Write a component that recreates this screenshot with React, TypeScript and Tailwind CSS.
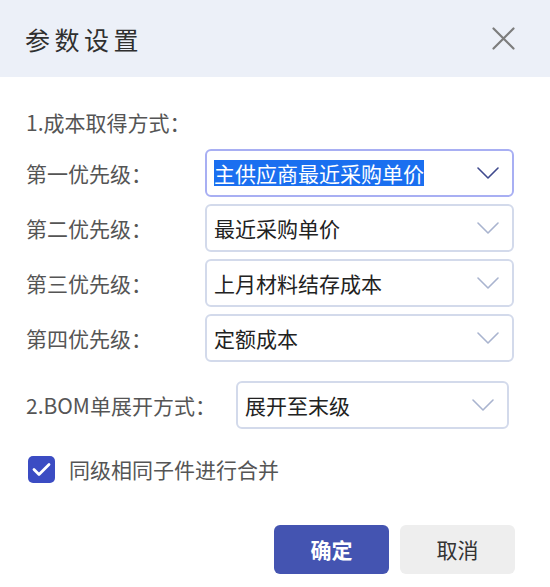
import React from "react";

const Chevron = ({ color }: { color: string }) => (
  <svg width="22" height="12" viewBox="0 0 22 12" fill="none">
    <path d="M1 1 L11 11 L21 1" stroke={color} strokeWidth="1.6" strokeLinecap="round" strokeLinejoin="round" />
  </svg>
);

const Select = ({
  value,
  focused,
  width,
}: {
  value: string;
  focused?: boolean;
  width: string;
}) => (
  <div
    className={
      "h-[48px] rounded-[6px] border-2 flex items-center justify-between pl-[7px] pr-[13px] " +
      width +
      (focused ? " border-[#a8aff3]" : " border-[#d3daeb]")
    }
  >
    {focused ? (
      <span className="bg-[#1a6ff0] text-white text-[21px] leading-[26px] px-0">{value}</span>
    ) : (
      <span className="text-[#222222] text-[21px] leading-[26px]">{value}</span>
    )}
    <Chevron color={focused ? "#3f4a8e" : "#a9b4cf"} />
  </div>
);

const Row = ({ label, value, focused }: { label: string; value: string; focused?: boolean }) => (
  <div className="flex items-center">
    <div className="w-[179px] text-[21px] text-[#555555] leading-[30px]">{label}</div>
    <Select value={value} focused={focused} width="w-[309px]" />
  </div>
);

export default function App() {
  return (
    <div
      className="w-[550px] h-[587px] bg-white overflow-hidden"
      style={{ fontFamily: '"Noto Sans CJK SC", "Noto Sans", sans-serif' }}
    >
      <div className="h-[77px] bg-[#ecf0f8] flex items-center justify-between pl-[25px] pr-[35px]">
        <div className="text-[25px] tracking-[4.5px] text-[#2f2f2f] leading-[30px]">参数设置</div>
        <svg width="23" height="23" viewBox="0 0 23 23" fill="none">
          <path d="M1.5 1.5 L21.5 21.5 M21.5 1.5 L1.5 21.5" stroke="#7d7d7d" strokeWidth="2.2" strokeLinecap="round" />
        </svg>
      </div>
      <div className="pl-[26px] pt-[30px]">
        <div className="h-[30px] text-[21px] text-[#555555] leading-[30px]">1.成本取得方式：</div>
        <div className="mt-[12px] flex flex-col gap-[7px]">
          <Row label="第一优先级：" value="主供应商最近采购单价" focused />
          <Row label="第二优先级：" value="最近采购单价" />
          <Row label="第三优先级：" value="上月材料结存成本" />
          <Row label="第四优先级：" value="定额成本" />
        </div>
        <div className="mt-[19px] flex items-center">
          <div className="w-[210px] text-[21px] text-[#555555] leading-[30px]">2.BOM单展开方式：</div>
          <Select value="展开至末级" width="w-[273px]" />
        </div>
        <div className="mt-[25px] flex items-center pl-[2px]">
          <div className="w-[27px] h-[27px] rounded-[5px] bg-[#3b4cc3] flex items-center justify-center">
            <svg width="19" height="15" viewBox="0 0 19 15" fill="none">
              <path d="M2 7.5 L7 12.5 L17 2.5" stroke="white" strokeWidth="2.8" strokeLinecap="round" strokeLinejoin="round" />
            </svg>
          </div>
          <div className="ml-[14px] text-[21px] text-[#555555] leading-[30px]">同级相同子件进行合并</div>
        </div>
        <div className="mt-[41px] flex justify-end pr-[35px] gap-[11px]">
          <button className="w-[115px] h-[49px] rounded-[6px] bg-[#4454b1] text-white text-[21px] font-bold">
            确定
          </button>
          <button className="w-[115px] h-[49px] rounded-[6px] bg-[#eeeeee] text-[#333333] text-[21px]">
            取消
          </button>
        </div>
      </div>
    </div>
  );
}
